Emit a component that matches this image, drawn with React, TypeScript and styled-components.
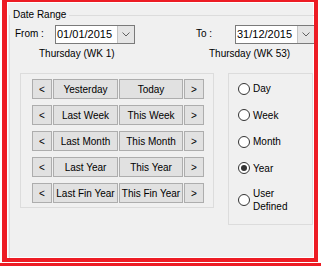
import styled, { createGlobalStyle } from 'styled-components';

const GlobalStyle = createGlobalStyle`
  html, body {
    margin: 0;
    padding: 0;
    background: #ffffff;
  }
  body {
    font-family: 'Liberation Sans', Arial, sans-serif;
    font-size: 10px;
    color: #000000;
  }
`;

const RED = '#ed1c24';

const quickRanges = [
  ['Yesterday', 'Today'],
  ['Last Week', 'This Week'],
  ['Last Month', 'This Month'],
  ['Last Year', 'This Year'],
  ['Last Fin Year', 'This Fin Year'],
];

const periods = [
  { label: 'Day', checked: false },
  { label: 'Week', checked: false },
  { label: 'Month', checked: false },
  { label: 'Year', checked: true },
  { label: 'User\nDefined', checked: false },
];

const Chevron = () => (
  <svg width="8" height="5" viewBox="0 0 8 5">
    <polyline points="0.5,0.5 4,4 7.5,0.5" fill="none" stroke="#606060" strokeWidth="1" />
  </svg>
);

const DatePicker = ({ value }: { value: string }) => (
  <DateBox>
    <DateText>{value}</DateText>
    <DropButton>
      <Chevron />
    </DropButton>
  </DateBox>
);

export default function App() {
  return (
    <Page>
      <GlobalStyle />
      <Frame>
        <GroupBox>
          <Legend>Date Range</Legend>

          <TopRow>
            <FieldLabel $width={40}>From :</FieldLabel>
            <DatePicker value="01/01/2015" />
            <FieldLabel $width={39} $offset={61}>
              To :
            </FieldLabel>
            <DatePicker value="31/12/2015" />
          </TopRow>

          <DayRow>
            <DayLabel $width={170}>Thursday (WK 1)</DayLabel>
            <DayLabel $width={100}>Thursday (WK 53)</DayLabel>
          </DayRow>

          <Body>
            <ButtonBox>
              <ButtonGrid>
                {quickRanges.map(([last, current]) => (
                  <Row key={last}>
                    <NavButton>&lt;</NavButton>
                    <NavButton>{last}</NavButton>
                    <NavButton>{current}</NavButton>
                    <NavButton>&gt;</NavButton>
                  </Row>
                ))}
              </ButtonGrid>
            </ButtonBox>

            <RadioBox>
              {periods.map((p) => (
                <RadioRow key={p.label} $multi={p.label.includes('\n')}>
                  <Circle>{p.checked && <Dot />}</Circle>
                  <RadioLabel>{p.label}</RadioLabel>
                </RadioRow>
              ))}
            </RadioBox>
          </Body>
        </GroupBox>
      </Frame>
      <BottomLine />
    </Page>
  );
}

const Page = styled.div`
  width: 321px;
  height: 266px;
  overflow: hidden;
  background: #ffffff;
`;

const Frame = styled.div`
  box-sizing: border-box;
  margin-left: 2px;
  width: 316px;
  height: 262px;
  border-style: solid;
  border-color: ${RED};
  border-width: 2px 4px 4px 5px;
  background: #f0f0f0;
  box-shadow: inset 0 0 0 1px #ffffff;
  overflow: hidden;
`;

const BottomLine = styled.div`
  margin-top: 1px;
  height: 3px;
  background: ${RED};
`;

const GroupBox = styled.fieldset`
  margin: 7px 0 0 2px;
  padding: 0;
  min-width: 0;
  border: 1px solid #dcdcdc;
  border-right: none;
  border-bottom: none;
  height: 260px;
`;

const Legend = styled.legend`
  padding: 0 3px;
  margin-left: 0;
  line-height: 12px;
  font-size: 10px;
`;

const TopRow = styled.div`
  display: flex;
  align-items: center;
  margin-top: 4px;
  padding-left: 5px;
  height: 19px;
`;

const FieldLabel = styled.span<{ $width: number; $offset?: number }>`
  flex: none;
  width: ${({ $width }) => $width}px;
  margin-left: ${({ $offset }) => $offset ?? 0}px;
  line-height: 12px;
  margin-top: -1px;
`;

const DateBox = styled.div`
  flex: none;
  box-sizing: border-box;
  display: flex;
  width: 80px;
  height: 19px;
  border: 1px solid #7a7a7a;
  background: #ffffff;
`;

const DateText = styled.span`
  flex: 1;
  padding-left: 1px;
  font-size: 11px;
  line-height: 17px;
`;

const DropButton = styled.div`
  box-sizing: border-box;
  width: 17px;
  height: 17px;
  display: flex;
  align-items: center;
  justify-content: center;
  background: #e5e5e5;
  border-left: 1px solid #c4c4c4;
`;

const DayRow = styled.div`
  display: flex;
  margin-top: 4px;
  padding-left: 29px;
  height: 12px;
  line-height: 12px;
`;

const DayLabel = styled.span<{ $width: number }>`
  flex: none;
  width: ${({ $width }) => $width}px;
  white-space: nowrap;
`;

const Body = styled.div`
  display: flex;
  align-items: flex-start;
  margin-top: 13px;
  padding-left: 10px;
`;

const ButtonBox = styled.div`
  box-sizing: border-box;
  width: 194px;
  height: 135px;
  border: 1px solid #dcdcdc;
  padding: 5px 0 0 11px;
`;

const ButtonGrid = styled.div`
  display: flex;
  flex-direction: column;
  gap: 6px;
`;

const Row = styled.div`
  display: grid;
  grid-template-columns: 20px 65px 64px 20px;
  column-gap: 1px;
  height: 20px;
`;

const NavButton = styled.button`
  box-sizing: border-box;
  margin: 0;
  padding: 0;
  height: 20px;
  border: 1px solid #adadad;
  border-radius: 0;
  background: #e1e1e1;
  font-family: 'Liberation Sans', Arial, sans-serif;
  font-size: 10px;
  color: #000000;
  white-space: nowrap;
  overflow: hidden;
`;

const RadioBox = styled.div`
  box-sizing: border-box;
  display: flex;
  flex-direction: column;
  gap: 13.5px;
  margin-left: 14px;
  width: 85px;
  height: 152px;
  border: 1px solid #dcdcdc;
  padding: 8px 0 0 9px;
`;

const RadioRow = styled.div<{ $multi: boolean }>`
  display: flex;
  align-items: center;
  gap: 3px;
  height: ${({ $multi }) => ($multi ? '26px' : '13px')};
  margin-top: ${({ $multi }) => ($multi ? '-1.5px' : '0')};
`;

const Circle = styled.span`
  box-sizing: border-box;
  flex: none;
  width: 12px;
  height: 12px;
  border: 1px solid #333333;
  border-radius: 50%;
  background: #ffffff;
  display: flex;
  align-items: center;
  justify-content: center;
`;

const Dot = styled.span`
  width: 6px;
  height: 6px;
  border-radius: 50%;
  background: #333333;
`;

const RadioLabel = styled.span`
  white-space: pre-line;
  line-height: 13px;
`;
